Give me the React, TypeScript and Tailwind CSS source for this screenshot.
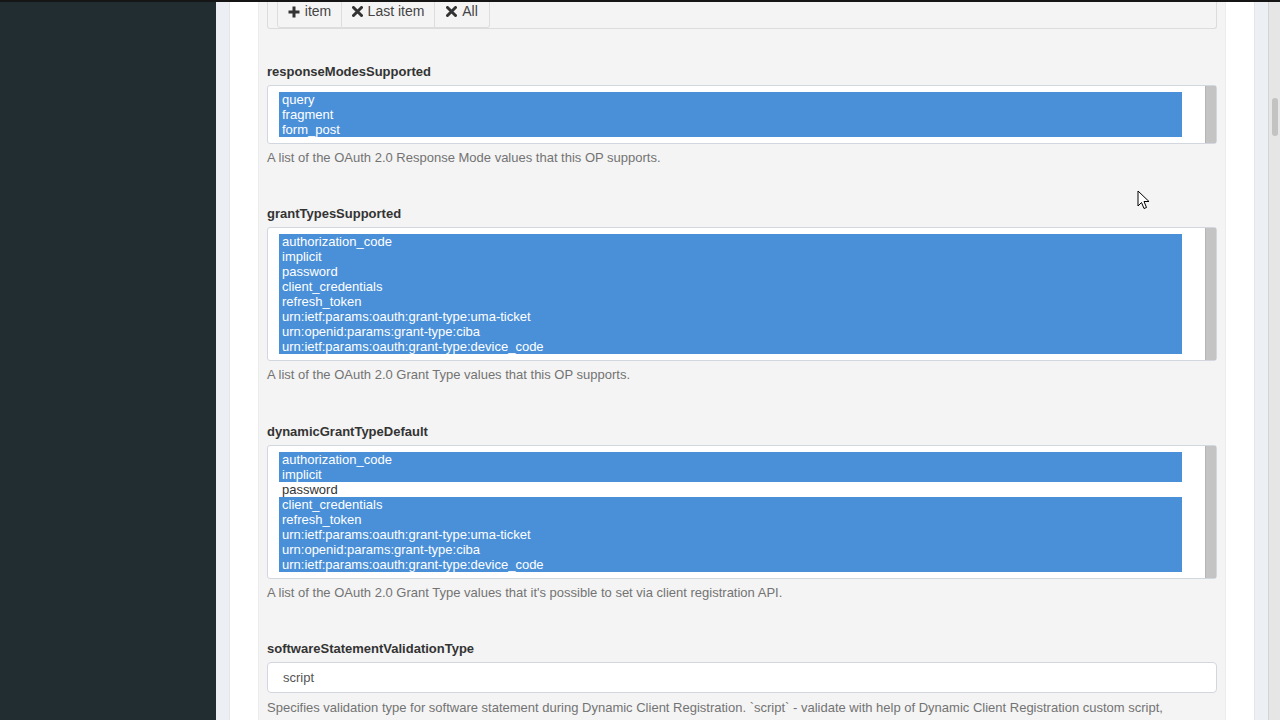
import React from 'react';

type Item = { text: string; selected: boolean };

const GRANTS = [
  'authorization_code',
  'implicit',
  'password',
  'client_credentials',
  'refresh_token',
  'urn:ietf:params:oauth:grant-type:uma-ticket',
  'urn:openid:params:grant-type:ciba',
  'urn:ietf:params:oauth:grant-type:device_code',
];

function PlusIcon() {
  return (
    <svg width="12" height="12" viewBox="0 0 12 12" className="shrink-0">
      <path d="M4.5 0.5h3v4h4v3h-4v4h-3v-4h-4v-3h4z" fill="#333" />
    </svg>
  );
}

function TimesIcon() {
  return (
    <svg width="11" height="11" viewBox="0 0 11 11" className="shrink-0">
      <path d="M1.5 1.5l8 8M9.5 1.5l-8 8" stroke="#333" strokeWidth="3" strokeLinecap="round" />
    </svg>
  );
}

function MultiSelect({ items }: { items: Item[] }) {
  return (
    <div className="flex bg-white border border-[#d2d6de] rounded-[3px]">
      <div className="flex-1 pt-[6px] pb-[6px] pl-[11px] pr-[23px]">
        {items.map((it) => (
          <div
            key={it.text}
            className={`h-[15px] leading-[15px] pl-[3px] text-[13px] ${
              it.selected ? 'bg-[#4a90d9] text-white' : 'text-[#333]'
            }`}
          >
            {it.text}
          </div>
        ))}
      </div>
      <div className="w-[11px] bg-[#c4c4c4] border-l border-[#b5b5b5]" />
    </div>
  );
}

function Field({
  label,
  help,
  gap,
  helpGap = 'mt-[5px]',
  children,
}: {
  label: string;
  help: string;
  gap: string;
  helpGap?: string;
  children: React.ReactNode;
}) {
  return (
    <div className={gap}>
      <div className="text-[13px] leading-[18px] font-bold text-[#333] mb-[4px]">{label}</div>
      {children}
      <p className={`${helpGap} text-[13px] leading-[18px] text-[#737373]`}>{help}</p>
    </div>
  );
}

export default function App() {
  return (
    <div
      className="relative w-[1280px] h-[720px] overflow-hidden flex border-t-2 border-[#151515]"
      style={{ fontFamily: '"Liberation Sans", Arial, sans-serif' }}
    >
      <aside className="w-[216px] shrink-0 bg-[#222d32]" />

      <main className="flex-1 flex bg-[#ecf0f5] px-[13px]">
        <div className="flex-1 flex bg-white border-x border-[#e3e5e8] px-[28px]">
          <div className="flex-1 bg-[#f4f4f4] border-x border-[#ececec] px-[8px]">
            <div className="flex h-[27px] border-x border-b border-[#dcdcdc] rounded-b-[3px] pl-[9px]">
              <div className="flex -mt-[7px] h-[33px] text-[14px] text-[#444]">
                <button className="flex items-center gap-[5px] w-[65px] justify-center bg-[#f4f4f4] border border-[#ddd] rounded-l-[3px]">
                  <PlusIcon />
                  <span>item</span>
                </button>
                <button className="flex items-center gap-[5px] w-[93px] justify-center bg-[#f4f4f4] border border-l-0 border-[#ddd]">
                  <TimesIcon />
                  <span>Last item</span>
                </button>
                <button className="flex items-center gap-[5px] w-[55px] justify-center bg-[#f4f4f4] border border-l-0 border-[#ddd] rounded-r-[3px]">
                  <TimesIcon />
                  <span>All</span>
                </button>
              </div>
            </div>

            <Field
              gap="mt-[34px]"
              label="responseModesSupported"
              help="A list of the OAuth 2.0 Response Mode values that this OP supports."
            >
              <MultiSelect
                items={['query', 'fragment', 'form_post'].map((t) => ({ text: t, selected: true }))}
              />
            </Field>

            <Field
              gap="mt-[38px]"
              label="grantTypesSupported"
              help="A list of the OAuth 2.0 Grant Type values that this OP supports."
            >
              <MultiSelect items={GRANTS.map((t) => ({ text: t, selected: true }))} />
            </Field>

            <Field
              gap="mt-[39px]"
              label="dynamicGrantTypeDefault"
              help="A list of the OAuth 2.0 Grant Type values that it's possible to set via client registration API."
            >
              <MultiSelect items={GRANTS.map((t) => ({ text: t, selected: t !== 'password' }))} />
            </Field>

            <Field
              gap="mt-[38px]"
              helpGap="mt-[6px]"
              label="softwareStatementValidationType"
              help="Specifies validation type for software statement during Dynamic Client Registration. `script` - validate with help of Dynamic Client Registration custom script,"
            >
              <div className="h-[31px] bg-white border border-[#d2d6de] rounded-[4px] flex items-center pl-[15px] text-[13px] text-[#555]">
                script
              </div>
            </Field>
          </div>
        </div>
      </main>

      <div className="w-[12px] shrink-0 bg-[#e6e6e6] border-l border-[#d4d4d4] pt-[96px] flex justify-center">
        <div className="w-[6px] h-[38px] rounded-full bg-[#c3c3c3]" />
      </div>

      <svg
        className="absolute left-[1137px] top-[188px]"
        width="13"
        height="21"
        viewBox="0 0 13 21"
      >
        <path
          d="M1 1v15l3.5-3.5 2.5 6 2.5-1-2.5-6h5z"
          fill="#fff"
          stroke="#000"
          strokeWidth="1"
          strokeLinejoin="round"
        />
      </svg>
    </div>
  );
}
